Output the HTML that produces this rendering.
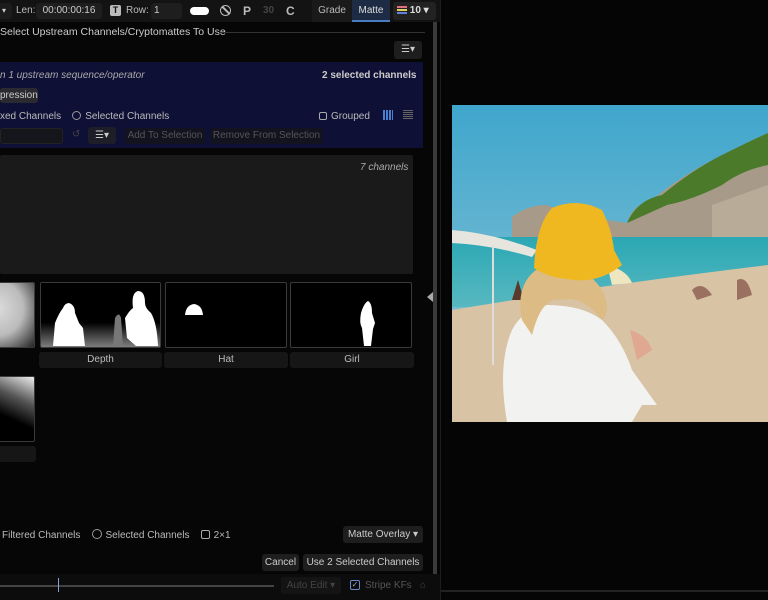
<!DOCTYPE html>
<html><head><meta charset="utf-8"><style>
*{margin:0;padding:0;box-sizing:border-box}
body{width:768px;height:600px;background:#050505;position:relative;overflow:hidden;font-family:"Liberation Sans",sans-serif;font-size:10px;color:#bbb}
.a{position:absolute;white-space:nowrap}
.btn{position:absolute;background:#1c1c1c;border-radius:3px;color:#ccc;text-align:center}
.th{position:absolute;background:#000;border:1px solid #3a3a3a;border-radius:2px;overflow:hidden}
.lb{position:absolute;background:#161616;border-radius:3px;color:#bbb;text-align:center;line-height:16px;font-size:10px}
.rad{display:inline-block;width:9px;height:9px;border:1px solid #999;border-radius:50%;vertical-align:-1px;margin-right:4px}
.chk{display:inline-block;width:9px;height:9px;border:1px solid #aaa;border-radius:2px;vertical-align:-1px;margin-right:4px}
</style></head><body>
<div class="a" style="left:0;top:0;width:440px;height:22px;background:#131313"></div>
<div class="btn" style="left:-4px;top:3px;width:16px;height:16px;font-size:8px;line-height:16px">▾</div>
<div class="a" style="left:16px;top:5px;color:#bbb">Len:</div>
<div class="btn" style="left:36px;top:3px;width:66px;height:16px;line-height:16px;background:#1e1e1e;color:#ccc">00:00:00:16</div>
<div class="a" style="left:110px;top:5px;width:11px;height:11px;background:#bbb;border-radius:2px;color:#111;font-weight:bold;font-size:9px;text-align:center;line-height:11px">T</div>
<div class="a" style="left:126px;top:5px">Row:</div>
<div class="btn" style="left:151px;top:3px;width:31px;height:16px;line-height:16px;text-align:left;padding-left:3px;background:#1e1e1e">1</div>
<div class="a" style="left:190px;top:7px;width:19px;height:8px;background:#fff;border-radius:4px"></div>
<div class="a" style="left:220px;top:5px;width:11px;height:11px;border:1.5px solid #bbb;border-radius:50%"></div>
<div class="a" style="left:225px;top:5px;width:1.5px;height:11px;background:#bbb;transform:rotate(-45deg)"></div>
<div class="a" style="left:243px;top:4px;font-size:12px;font-weight:bold;color:#bbb">P</div>
<div class="a" style="left:263px;top:5px;font-size:10px;color:#444;font-weight:bold">30</div>
<div class="a" style="left:286px;top:4px;font-size:12px;font-weight:bold;color:#bbb">C</div>
<div class="a" style="left:312px;top:0;width:40px;height:22px;background:#1a1a1a;text-align:center;line-height:22px;color:#bbb">Grade</div>
<div class="a" style="left:352px;top:0;width:38px;height:22px;background:#1d2b45;border-bottom:2px solid #4a7cc0;text-align:center;line-height:22px;color:#ddd">Matte</div>
<div class="btn" style="left:393px;top:2px;width:43px;height:18px;line-height:18px;background:#222;text-align:left;padding-left:4px;color:#ddd;font-weight:bold">
<span style="display:inline-block;width:10px;height:8px;vertical-align:-1px;background:linear-gradient(#e07080 0 25%,#222 25% 37%,#e0d060 37% 62%,#222 62% 75%,#6080e0 75%)"></span> 10 ▾</div>
<div class="a" style="left:0;top:22px;width:432px;height:555px;background:#060606"></div>
<div class="a" style="left:0;top:26px;color:#ccc;font-size:10.5px">Select Upstream Channels/Cryptomattes To Use</div>
<div class="a" style="left:220px;top:32px;width:205px;height:1px;background:#333"></div>
<div class="btn" style="left:394px;top:41px;width:28px;height:18px;line-height:18px;background:#1e1e1e">☰▾</div>
<div class="a" style="left:0;top:62px;width:423px;height:86px;background:#0f1035"></div>
<div class="a" style="left:0;top:70px;font-style:italic;color:#aaa">n 1 upstream sequence/operator</div>
<div class="a" style="left:322px;top:70px;font-weight:bold;color:#ccc">2 selected channels</div>
<div class="a" style="left:0;top:88px;width:38px;height:15px;background:#2a2a30;border-radius:3px;line-height:15px;color:#ccc">pression</div>
<div class="a" style="left:0;top:111px;color:#bbb">xed Channels &nbsp;&nbsp;&nbsp;<span class="rad"></span>Selected Channels</div>
<div class="a" style="left:319px;top:111px;color:#bbb"><span class="chk" style="width:8px;height:8px"></span>Grouped</div>
<div class="a" style="left:383px;top:110px;width:10px;height:10px;background:repeating-linear-gradient(90deg,#4a7fd0 0 2px,#0f1035 2px 3px)"></div>
<div class="a" style="left:403px;top:110px;width:10px;height:10px;background:repeating-linear-gradient(#666 0 1px,#0f1035 1px 2px)"></div>
<div class="a" style="left:0;top:128px;width:63px;height:16px;background:#15151c;border-radius:3px;border:1px solid #222"></div>
<div class="a" style="left:72px;top:129px;color:#444">↺</div>
<div class="btn" style="left:88px;top:127px;width:28px;height:17px;line-height:17px;background:#1e1e28">☰▾</div>
<div class="btn" style="left:125px;top:128px;width:80px;height:16px;line-height:16px;background:#131320;color:#555">Add To Selection</div>
<div class="btn" style="left:210px;top:128px;width:113px;height:16px;line-height:16px;background:#131320;color:#555">Remove From Selection</div>
<div class="a" style="left:0;top:155px;width:413px;height:119px;background:#1a1a1a;border-radius:2px"></div>
<div class="a" style="left:360px;top:162px;font-style:italic;color:#aaa">7 channels</div>
<div class="th" style="left:-4px;top:282px;width:39px;height:66px;background:radial-gradient(ellipse at 0% 40%,#ddd 0,#bbb 50%,#222 100%)"></div>
<div class="th" style="left:40px;top:282px;width:121px;height:66px">
<svg width="121" height="66"><defs><linearGradient id="g" x1="0" y1="0" x2="0" y2="1"><stop offset="0.6" stop-color="#000"/><stop offset="1" stop-color="#888"/></linearGradient></defs><rect width="121" height="66" fill="url(#g)"/>
<path d="M12 63 L14 40 Q18 30 22 25 Q24 20 28 20 Q34 22 34 30 L38 40 L42 45 L44 63Z" fill="#fff"/>
<path d="M95 63 L86 55 L84 35 Q88 28 92 25 Q90 10 97 8 Q104 8 104 20 Q104 25 110 30 Q116 40 117 63Z" fill="#fff"/>
<path d="M72 63 L74 35 Q78 28 80 35 L82 63Z" fill="#777"/></svg></div>
<div class="th" style="left:165px;top:282px;width:122px;height:66px"><svg width="122" height="66"><path d="M19 32 Q20 22 28 21 Q36 22 37 32Z" fill="#fff"/></svg></div>
<div class="th" style="left:290px;top:282px;width:122px;height:66px"><svg width="122" height="66"><path d="M73 63 L71 45 Q68 40 70 30 Q73 20 77 18 Q81 20 81 30 L84 40 L82 46 L80 63Z" fill="#fff"/></svg></div>
<div class="lb" style="left:-4px;top:352px;width:39px"></div>
<div class="lb" style="left:39px;top:352px;width:123px">Depth</div>
<div class="lb" style="left:164px;top:352px;width:124px">Hat</div>
<div class="lb" style="left:290px;top:352px;width:124px">Girl</div>
<div class="th" style="left:-4px;top:376px;width:39px;height:66px;background:linear-gradient(205deg,#eee 0,#555 35%,#000 65%)"></div>
<div class="lb" style="left:-4px;top:446px;width:40px;height:16px"></div>
<div class="a" style="left:2px;top:529px;color:#bbb">Filtered Channels &nbsp;&nbsp;&nbsp;<span class="rad" style="width:10px;height:10px"></span>Selected Channels &nbsp;&nbsp;&nbsp;<span class="chk" style="width:9px;height:9px"></span>2×1</div>
<div class="btn" style="left:343px;top:526px;width:80px;height:17px;line-height:17px;background:#1e1e1e">Matte Overlay ▾</div>
<div class="btn" style="left:262px;top:554px;width:37px;height:17px;line-height:17px;background:#1e1e1e">Cancel</div>
<div class="btn" style="left:303px;top:554px;width:120px;height:17px;line-height:17px;background:#1e1e1e">Use 2 Selected Channels</div>
<div class="a" style="left:433px;top:22px;width:4px;height:552px;background:#3a3a3a"></div>
<div class="a" style="left:427px;top:292px;width:0;height:0;border-top:5px solid transparent;border-bottom:5px solid transparent;border-right:6px solid #aaa"></div>
<div class="a" style="left:0;top:574px;width:440px;height:26px;background:#0c0c0c"></div>
<div class="a" style="left:0;top:585px;width:274px;height:2px;background:#444"></div>
<div class="a" style="left:58px;top:578px;width:1px;height:14px;background:#8aa0d0"></div>
<div class="btn" style="left:281px;top:577px;width:60px;height:17px;line-height:17px;background:#141414;color:#444">Auto Edit ▾</div>
<div class="a" style="left:350px;top:580px;width:10px;height:10px;border:1px solid #6a88c8;border-radius:2px;color:#9ab;font-size:8px;line-height:8px;text-align:center">✓</div>
<div class="a" style="left:365px;top:580px;color:#555">Stripe KFs</div>
<div class="a" style="left:420px;top:580px;color:#444">⌂</div>
<div class="a" style="left:440px;top:0;width:1px;height:600px;background:#1c1c1c"></div>
<div class="a" style="left:441px;top:590px;width:327px;height:2px;background:#222"></div>
<div class="a" style="left:452px;top:105px;width:316px;height:317px;overflow:hidden">
<svg width="316" height="317" viewBox="0 0 316 317">
<defs><linearGradient id="sky" x1="0" y1="0" x2="0" y2="1"><stop offset="0" stop-color="#3fa6cc"/><stop offset="1" stop-color="#95c8d6"/></linearGradient>
<linearGradient id="sea" x1="0" y1="0" x2="0" y2="1"><stop offset="0" stop-color="#2aa8b4"/><stop offset="1" stop-color="#58b8c0"/></linearGradient></defs>
<rect width="316" height="317" fill="url(#sky)"/>
<path d="M60 112 Q75 100 95 100 L120 110 L175 118 Q180 100 200 95 Q230 70 270 50 Q300 35 316 28 L316 160 L170 165 L60 140Z" fill="#a89a88"/>
<path d="M175 118 Q185 95 210 90 Q240 65 270 50 Q300 35 316 28 L316 60 Q290 65 270 80 Q240 95 215 100Z" fill="#4a7a2a"/>
<path d="M260 100 L316 80 L316 160 L260 160Z" fill="#b8ab98"/>
<rect x="0" y="132" width="316" height="70" fill="url(#sea)"/>
<path d="M0 205 Q150 180 316 160 L316 317 L0 317Z" fill="#d8c3a4"/>
<path d="M0 125 Q40 128 85 145 L80 152 Q40 140 0 138Z" fill="#e6e6de"/>
<rect x="40" y="140" width="2" height="120" fill="#ddd"/>
<path d="M60 195 L66 175 L72 195Z" fill="#5a3a2a"/>
<path d="M155 160 Q175 165 180 178 L160 180 Z" fill="#eee6c0"/>
<path d="M285 175 Q295 170 300 190 L285 195Z" fill="#9a7060"/>
<path d="M240 185 Q250 175 260 190 L245 195Z" fill="#9a7060"/>
<path d="M55 317 Q45 260 60 225 Q70 205 95 200 Q130 200 150 215 Q170 235 180 265 L205 300 L190 300 L180 317Z" fill="#f2f2f0"/>
<path d="M70 215 Q62 175 92 160 Q130 155 150 185 Q160 205 150 215 Q130 190 110 195 Q90 190 80 230Z" fill="#dcbc84"/>
<path d="M82 163 Q84 120 100 103 Q125 92 150 105 Q160 125 162 145 L170 160 Q145 180 115 174 Q95 172 82 163Z" fill="#f0b820"/>
<path d="M178 225 Q195 230 200 245 L185 255 Z" fill="#e0a890"/>
</svg></div>
</body></html>
